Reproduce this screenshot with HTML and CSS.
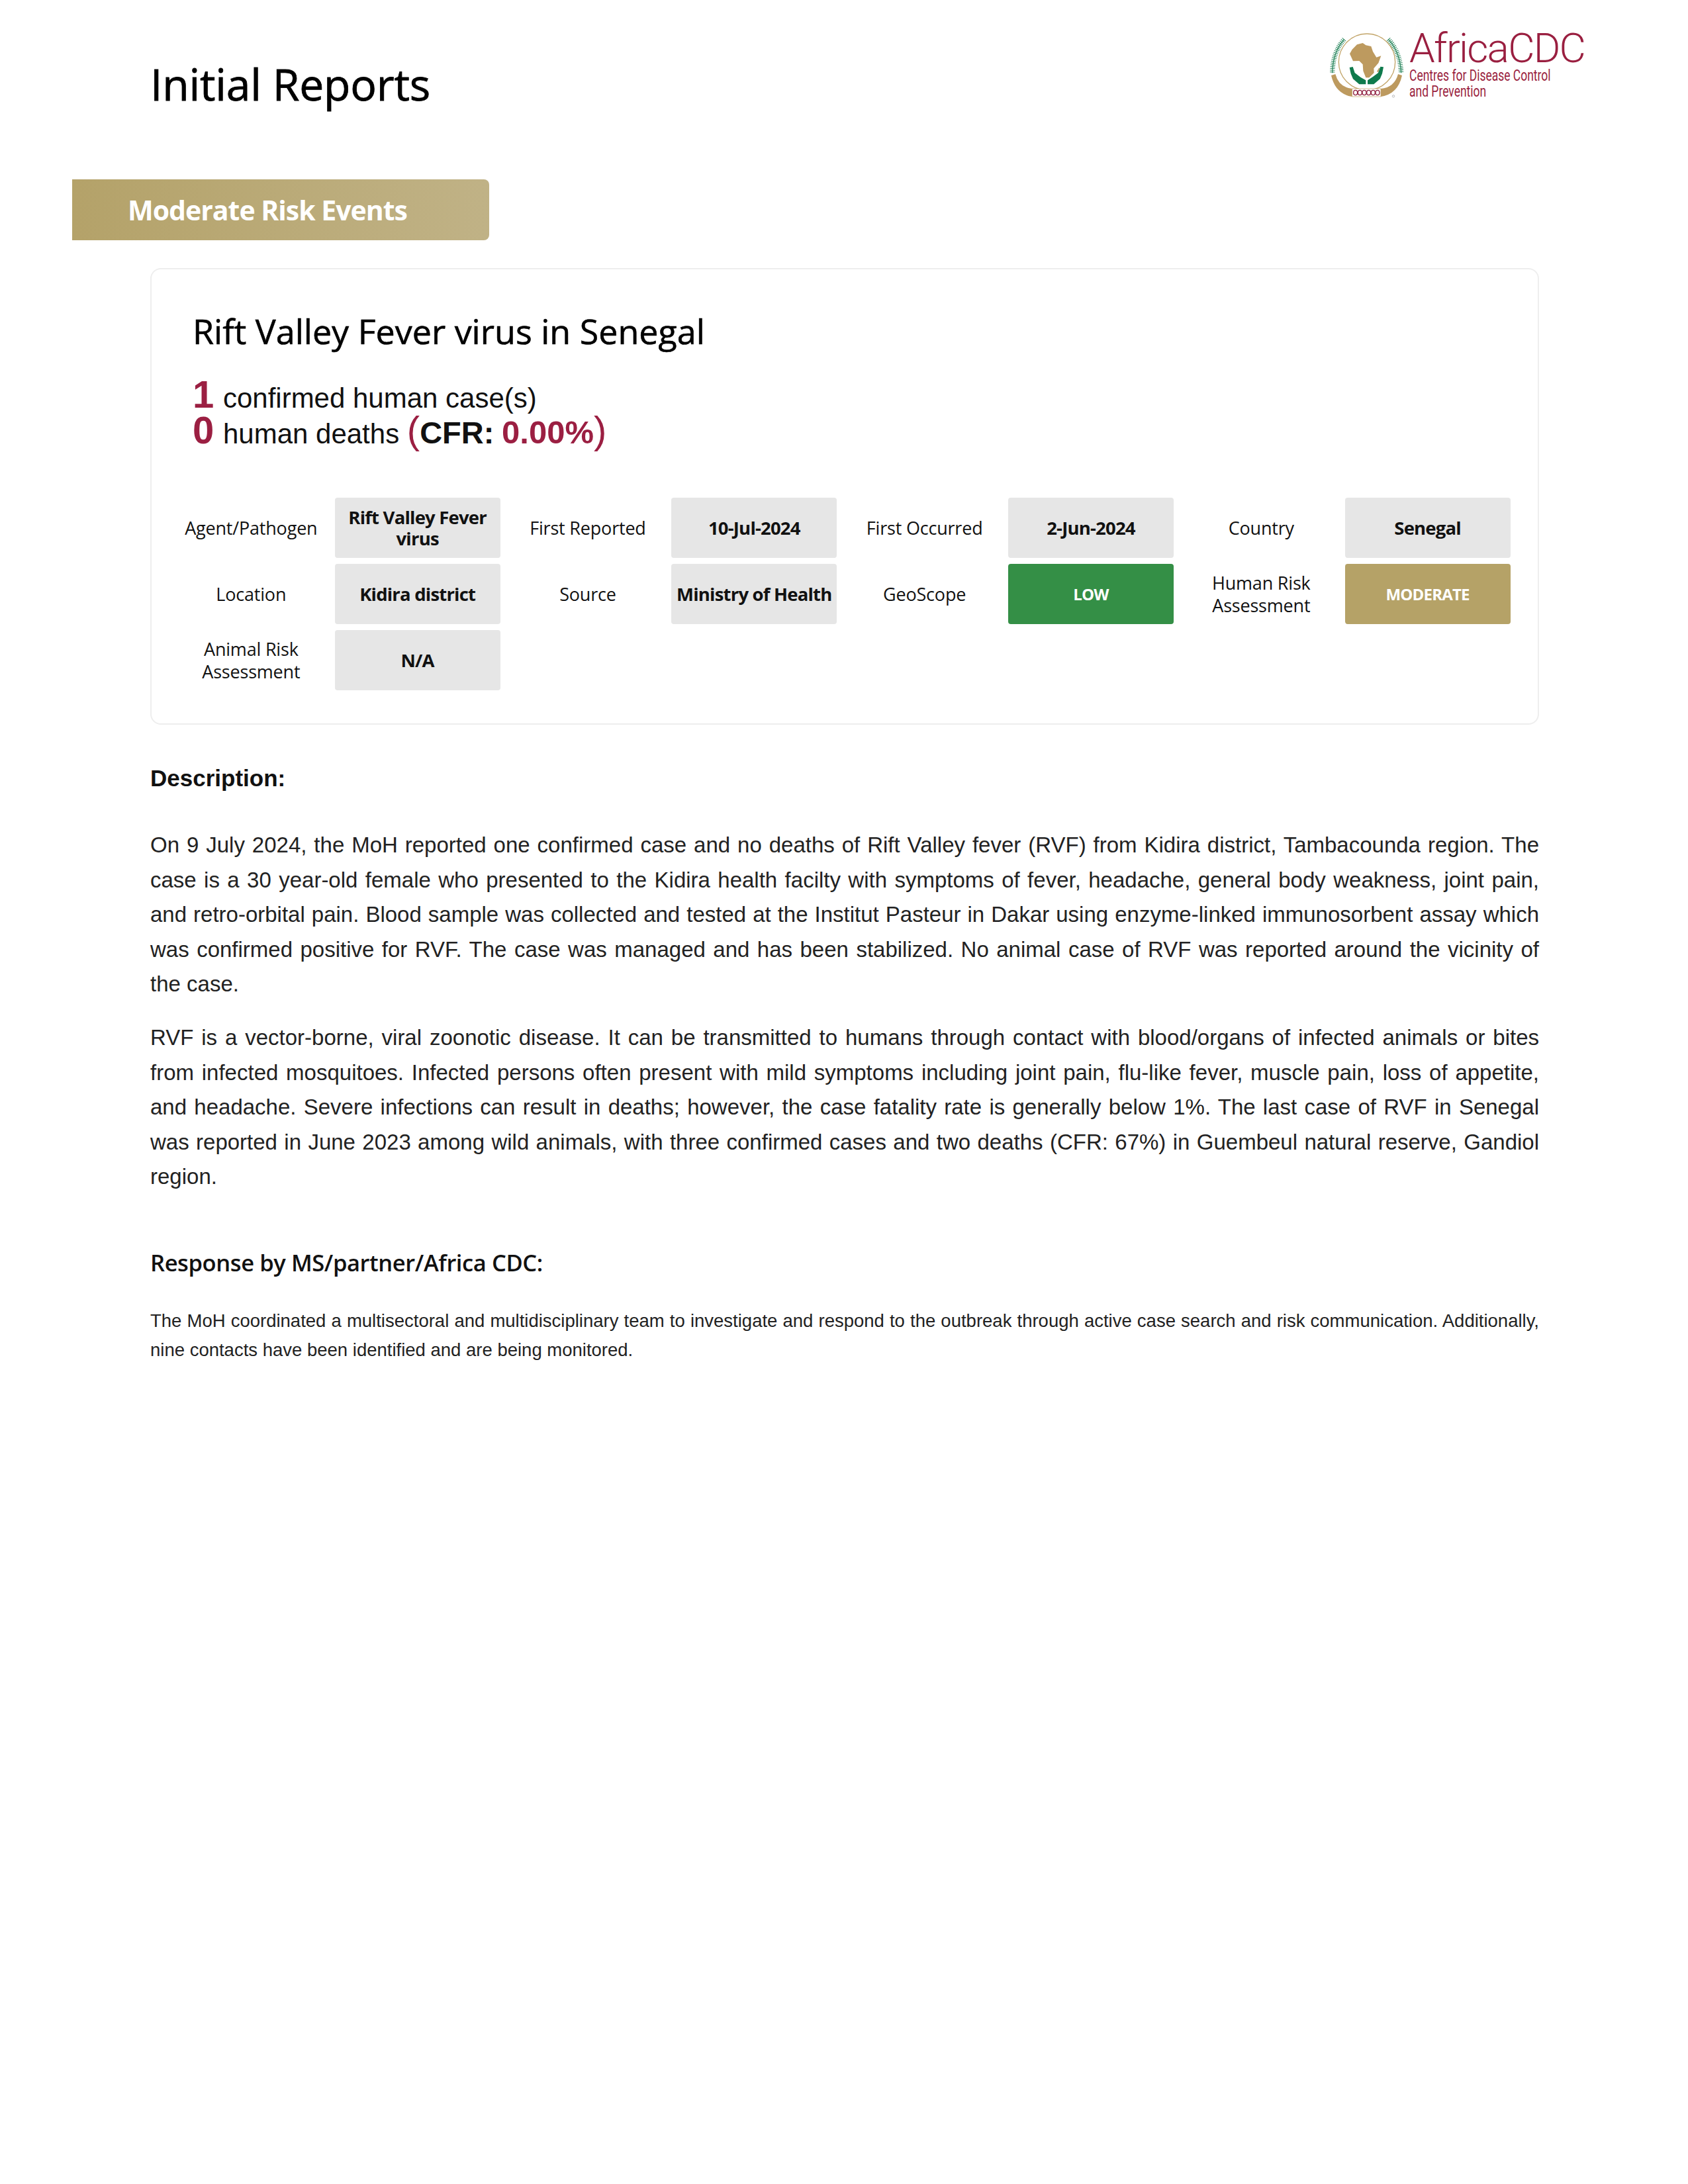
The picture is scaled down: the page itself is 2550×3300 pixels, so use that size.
FILE: index.html
```html
<!DOCTYPE html>
<html lang="en">
<head>
<meta charset="utf-8">
<title>Initial Reports</title>
<link rel="stylesheet" href="styles.css">
</head>
<body>
<header class="top">
  <h1 class="page-title">Initial Reports</h1>
  <div class="logo">
    <svg class="emblem" viewBox="0 0 390 360" width="130" height="120" aria-hidden="true">
      <circle cx="195" cy="155" r="128" fill="none" stroke="#c2a468" stroke-width="4"/>
      <g fill="none" stroke="#2f8a62">
        <path d="M92 52Q40 110 38 205" stroke-width="4"/>
        <path d="M92 52Q40 110 38 205" stroke-width="22" stroke-dasharray="3 5"/>
        <path d="M292 52Q346 110 350 205" stroke-width="4"/>
        <path d="M292 52Q346 110 350 205" stroke-width="22" stroke-dasharray="3 5"/>
      </g>
      <path fill="#bd9a5f" d="M117 118L128 98 150 76 176 69 190 79 214 84 222 108 238 134 259 127 247 160 226 184 227 204 205 226 190 226 178 196 176 166 160 150 132 151Z"/>
      <path fill="#bd9a5f" d="M240 198L250 181 253 184 246 202Z"/>
      <path fill="#0f7a4c" d="M116 180L131 177 140 204 166 224 190 238 190 256 160 256 132 232 122 208Z"/>
      <path fill="#0f7a4c" d="M270 178L256 176 246 204 222 222 198 238 198 256 226 256 254 232 264 208Z"/>
      <path fill="#bd9a5f" d="M33 216L52 210Q68 270 128 276V312Q52 300 33 216Z"/>
      <path fill="#bd9a5f" d="M354 216L336 210Q320 270 258 276V312Q336 300 354 216Z"/>
      <rect x="128" y="276" width="130" height="36" fill="#fff" stroke="#bd9a5f" stroke-width="2"/>
      <g fill="none" stroke="#8f1f3f" stroke-width="4">
        <ellipse cx="143" cy="294" rx="9" ry="11"/>
        <ellipse cx="163" cy="294" rx="9" ry="11"/>
        <ellipse cx="183" cy="294" rx="9" ry="11"/>
        <ellipse cx="203" cy="294" rx="9" ry="11"/>
        <ellipse cx="223" cy="294" rx="9" ry="11"/>
        <ellipse cx="243" cy="294" rx="9" ry="11"/>
      </g>
      <circle cx="315" cy="310" r="5" fill="none" stroke="#999" stroke-width="2"/>
    </svg>
    <div class="wordmark">
      <div class="brand">AfricaCDC</div>
      <div class="brand-sub">Centres for Disease Control<br>and Prevention</div>
    </div>
  </div>
</header>

<div class="banner">Moderate Risk Events</div>

<main class="content">
  <section class="card">
    <h2 class="card-title">Rift Valley Fever virus in Senegal</h2>
    <div class="stats">
      <div class="stat-line"><span class="num">1</span> confirmed human case(s)</div>
      <div class="stat-line"><span class="num">0</span> human deaths <span class="paren">(</span><b class="cfr">CFR:</b> <b class="cfr-val">0.00%</b><span class="paren">)</span></div>
    </div>
    <div class="facts">
      <div class="label">Agent/Pathogen</div><div class="value">Rift Valley Fever virus</div>
      <div class="label">First Reported</div><div class="value">10-Jul-2024</div>
      <div class="label">First Occurred</div><div class="value">2-Jun-2024</div>
      <div class="label">Country</div><div class="value">Senegal</div>
      <div class="label">Location</div><div class="value">Kidira district</div>
      <div class="label">Source</div><div class="value">Ministry of Health</div>
      <div class="label">GeoScope</div><div class="value risk low">LOW</div>
      <div class="label">Human Risk Assessment</div><div class="value risk moderate">MODERATE</div>
      <div class="label">Animal Risk Assessment</div><div class="value">N/A</div>
    </div>
  </section>

  <h3 class="desc-title">Description:</h3>
  <p class="body-text first">On 9 July 2024, the MoH reported one confirmed case and no deaths of Rift Valley fever (RVF) from Kidira district, Tambacounda region. The case is a 30 year-old female who presented to the Kidira health facilty with symptoms of fever, headache, general body weakness, joint pain, and retro-orbital pain. Blood sample was collected and tested at the Institut Pasteur in Dakar using enzyme-linked immunosorbent assay which was confirmed positive for RVF. The case was managed and has been stabilized. No animal case of RVF was reported around the vicinity of the case.</p>
  <p class="body-text">RVF is a vector-borne, viral zoonotic disease. It can be transmitted to humans through contact with blood/organs of infected animals or bites from infected mosquitoes. Infected persons often present with mild symptoms including joint pain, flu-like fever, muscle pain, loss of appetite, and headache. Severe infections can result in deaths; however, the case fatality rate is generally below 1%. The last case of RVF in Senegal was reported in June 2023 among wild animals, with three confirmed cases and two deaths (CFR: 67%) in Guembeul natural reserve, Gandiol region.</p>

  <h3 class="resp-title">Response by MS/partner/Africa CDC:</h3>
  <p class="resp-text">The MoH coordinated a multisectoral and multidisciplinary team to investigate and respond to the outbreak through active case search and risk communication. Additionally, nine contacts have been identified and are being monitored.</p>
</main>
</body>
</html>
```
FILE: styles.css
```css
* { box-sizing: border-box; }
html, body { margin: 0; padding: 0; background: #fff; }
body { width: 2550px; height: 3300px; overflow: hidden; font-family: "Liberation Sans", Arial, sans-serif; color: #111; }

.top { display: flex; justify-content: space-between; align-items: flex-start; height: 271px; padding: 45px 158px 0 227px; }
.page-title { margin: 36px 0 0; font: 400 66px/90px "Open Sans", sans-serif; letter-spacing: -0.2px; -webkit-text-stroke: 0.8px #000; color: #000; }

.logo { display: flex; gap: 0; width: 392px; }
.emblem { flex: none; display: block; margin-top: -3px; }
.wordmark { margin-left: -1px; color: #9a1f40; white-space: nowrap; }
.brand { font: 300 62px/56px Roboto, sans-serif; letter-spacing: -1.7px; }
.brand-sub { margin-top: 2px; font: 400 23px/24px Roboto, sans-serif; transform: scaleX(0.76); transform-origin: left top; }

.banner { display: flex; align-items: center; width: 630px; height: 92px; margin-left: 109px; padding-left: 84px; border-radius: 0 8px 8px 0; background: linear-gradient(90deg, #b4a269, #c0b286); color: #fff; font: 700 41px/1 "Open Sans", sans-serif; letter-spacing: -1px; }

.content { width: 2098px; margin: 42px 0 0 227px; }

.card { height: 690px; padding: 58px 45px 0 62px; border: 2px solid #eeeeee; border-radius: 16px; }
.card-title { margin: 0; font: 400 52px/70px "Open Sans", sans-serif; letter-spacing: 0; -webkit-text-stroke: 0.6px #000; color: #000; }
.stats { margin-top: 32px; font-size: 42px; line-height: 54px; color: #111; }
.stat-line { height: 54px; white-space: nowrap; }
.num { margin-right: 2px; color: #9b1f42; font-weight: 700; font-size: 58px; line-height: 1; }
.paren { color: #9b1f42; font-size: 58px; line-height: 1; }
.cfr { font-size: 47px; line-height: 1; color: #111; }
.cfr-val { font-size: 49px; line-height: 1; color: #9b1f42; }

.facts { display: grid; grid-template-columns: repeat(4, 252.67px 250px); grid-auto-rows: 91px; row-gap: 9px; column-gap: 3px; margin: 77px 0 0 -41px; width: 2041px; }
.label { display: flex; align-items: center; justify-content: center; padding: 0 26px 0 32px; text-align: center; font: 400 27px/34px "Open Sans", sans-serif; letter-spacing: -0.2px; color: #111; }
.value { display: flex; align-items: center; justify-content: center; padding: 0 2px; border-radius: 4px; background: #e6e6e6; text-align: center; font: 700 27.5px/32px "Open Sans", sans-serif; letter-spacing: -0.8px; color: #111; }
.value:first-of-type { padding: 0 8px; }
.risk { color: #fff; font-size: 24px; }
.low { background: #348f46; }
.moderate { background: #b5a267; }

.desc-title { margin: 58px 0 0; font-size: 35px; line-height: 46px; font-weight: 700; }
.body-text { margin: 0; font-size: 33px; line-height: 52.6px; text-align: justify; color: #222; }
.body-text.first { margin-top: 52px; margin-bottom: 28px; }
.resp-title { margin: 80px 0 0; font: 600 34.5px/46px "Open Sans", sans-serif; letter-spacing: -0.4px; color: #111; }
.resp-text { margin: 43px 0 0; font-size: 27.5px; line-height: 44px; text-align: justify; color: #222; }
```
